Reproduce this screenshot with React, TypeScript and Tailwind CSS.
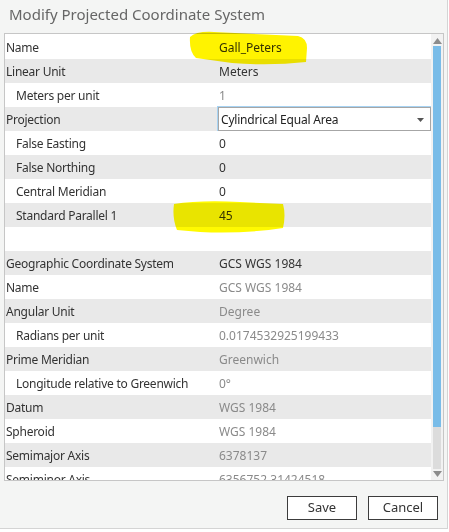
import React from 'react';

type Row = {
  label: string;
  value?: string;
  indent?: boolean;
  muted?: boolean;
  combo?: boolean;
};

const rows: Row[] = [
  { label: 'Name', value: 'Gall_Peters' },
  { label: 'Linear Unit', value: 'Meters' },
  { label: 'Meters per unit', value: '1', indent: true, muted: true },
  { label: 'Projection', value: 'Cylindrical Equal Area', combo: true },
  { label: 'False Easting', value: '0', indent: true },
  { label: 'False Northing', value: '0', indent: true },
  { label: 'Central Meridian', value: '0', indent: true },
  { label: 'Standard Parallel 1', value: '45', indent: true },
  { label: '' },
  { label: 'Geographic Coordinate System', value: 'GCS WGS 1984' },
  { label: 'Name', value: 'GCS WGS 1984', muted: true },
  { label: 'Angular Unit', value: 'Degree', muted: true },
  { label: 'Radians per unit', value: '0.0174532925199433', indent: true, muted: true },
  { label: 'Prime Meridian', value: 'Greenwich', muted: true },
  { label: 'Longitude relative to Greenwich', value: '0°', indent: true, muted: true },
  { label: 'Datum', value: 'WGS 1984', muted: true },
  { label: 'Spheroid', value: 'WGS 1984', muted: true },
  { label: 'Semimajor Axis', value: '6378137', muted: true },
  { label: 'Semiminor Axis', value: '6356752.31424518', muted: true },
];

function GridRow({ row, index }: { row: Row; index: number }) {
  return (
    <div
      className={`flex h-[24px] shrink-0 items-center ${index % 2 === 1 ? 'bg-[#e9e9e9]' : 'bg-white'}`}
    >
      <div
        className={`w-[213px] shrink-0 truncate pt-[1px] tracking-[-0.25px] text-[#333] ${row.indent ? 'pl-[11px]' : 'pl-[1px]'}`}
      >
        {row.label}
      </div>
      {row.combo ? (
        <div className="flex h-[24px] flex-1 items-center border border-[#a6a6a6] bg-white pl-[2px] pr-[6px] pt-[1px] tracking-[-0.2px] text-[#222] shadow-[0_0_0_1px_#a7d3f3]">
          <span className="flex-1">{row.value}</span>
          <svg width="7" height="4" viewBox="0 0 7 4">
            <path d="M0 0h7L3.5 4z" fill="#555" />
          </svg>
        </div>
      ) : (
        <div className={`flex-1 pl-[1px] pt-[1px] ${row.muted ? 'text-[#8a8a8a]' : 'text-[#333]'}`}>
          {row.value}
        </div>
      )}
    </div>
  );
}

export default function App() {
  return (
    <div
      className="relative h-[532px] w-[449px] overflow-hidden bg-white text-[12px]"
      style={{ fontFamily: '"Noto Sans", "Open Sans", sans-serif' }}
    >
      <div className="flex h-[529px] w-[448px] flex-col border-b border-r border-[#d4d4d4] bg-[#f4f5f4]">
        <div className="h-[33px] shrink-0 pl-[9px] pt-[3px] text-[15px] text-[#666]">
          Modify Projected Coordinate System
        </div>

        <div className="ml-[4px] flex h-[448px] w-[440px] shrink-0 border border-[#c6c6c6] bg-white">
          <div className="flex flex-1 flex-col overflow-hidden pt-[1px]">
            {rows.map((row, i) => (
              <GridRow key={i} row={row} index={i} />
            ))}
          </div>
          <div className="flex w-[12px] shrink-0 flex-col items-center bg-[#f2f2f2] pt-[4px]">
            <svg width="9" height="6" viewBox="0 0 9 6">
              <path d="M4.5 0L9 6H0z" fill="#8c8c8c" />
            </svg>
            <div className="mt-[2px] flex w-[8px] flex-1 flex-col bg-[#dcdcdc]">
              <div className="h-[381px] bg-[#79bce8]" />
            </div>
            <svg className="mb-[3px] mt-[2px]" width="9" height="6" viewBox="0 0 9 6">
              <path d="M0 0h9L4.5 6z" fill="#8c8c8c" />
            </svg>
          </div>
        </div>

        <div className="mt-[15px] flex justify-end gap-[11px] pr-[9px] text-[13px] text-[#333]">
          <button className="h-[24px] w-[70px] border border-[#3c3c3c] bg-white">Save</button>
          <button className="h-[24px] w-[70px] border border-[#3c3c3c] bg-white">Cancel</button>
        </div>
      </div>

      <svg
        className="pointer-events-none absolute left-0 top-0 mix-blend-multiply"
        width="449"
        height="532"
        viewBox="0 0 449 532"
      >
        <path
          d="M190 37 Q196 31 214 32 L298 36 Q307 38 307 48 L306 62 Q270 66 232 63 L196 58 Q189 52 190 37 Z"
          fill="#fff300"
        />
        <path
          d="M174 204 Q200 200 240 202 L283 204 Q286 215 283 228 Q245 234 200 232 L177 230 Q172 218 174 204 Z"
          fill="#fffa00"
        />
      </svg>
    </div>
  );
}
